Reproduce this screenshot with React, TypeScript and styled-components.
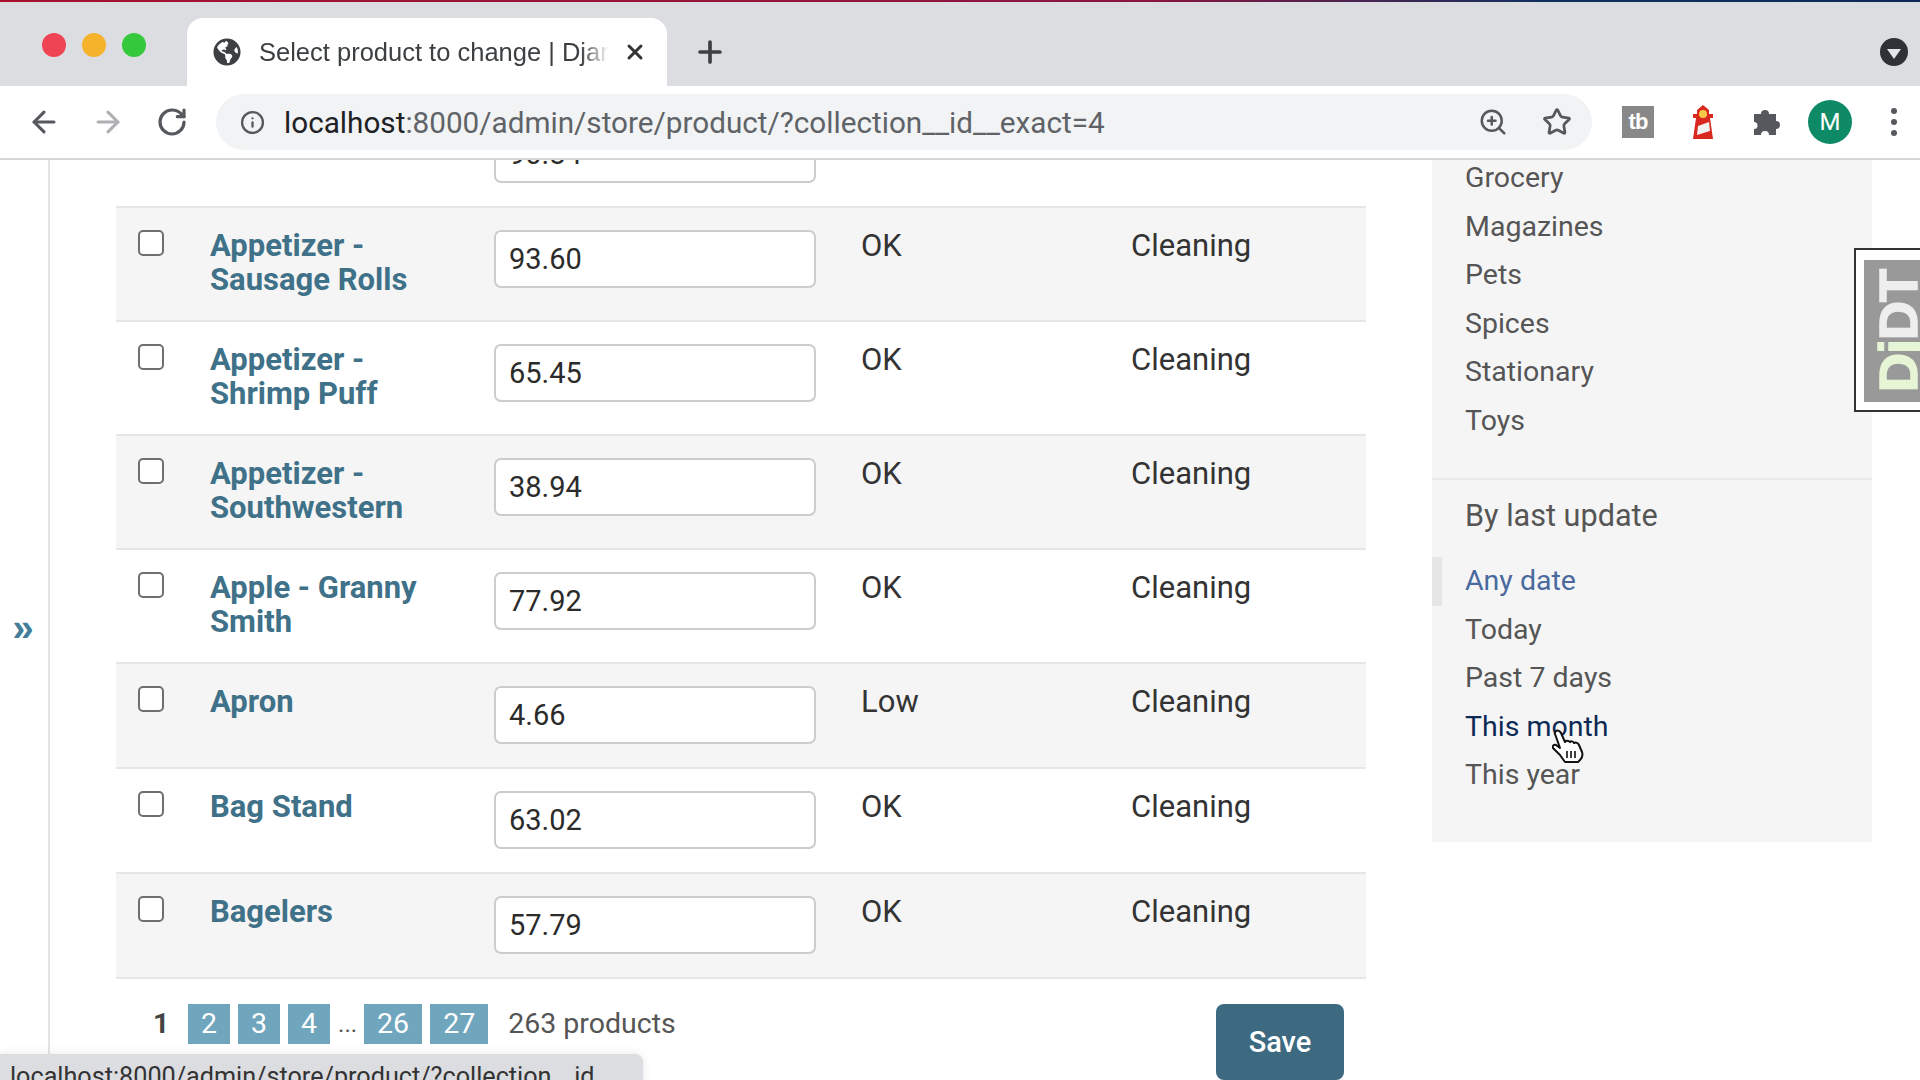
import React from 'react';
import styled, { createGlobalStyle } from 'styled-components';
import { ArrowLeft, ArrowRight, Info, Plus, RotateCw, Star, X, ZoomIn } from 'lucide-react';
import { FaGlobeAmericas } from 'react-icons/fa';

const GlobalStyle = createGlobalStyle`
  html, body {
    margin: 0;
    width: 1920px;
    height: 1080px;
    overflow: hidden;
    background: #fff;
    font-family: Roboto, "Liberation Sans", sans-serif;
  }
  * { box-sizing: border-box; }
`;

const Screen = styled.div`
  position: relative;
  width: 1920px;
  height: 1080px;
  overflow: hidden;
  display: flex;
  flex-direction: column;
`;

/* browser chrome */
const TabBar = styled.div`
  height: 86px;
  flex: none;
  display: flex;
  align-items: flex-end;
  padding: 2px 12px 0 36px;
  background: #dcdde1;
  border-top: 2px solid;
  border-image: linear-gradient(90deg, #a8122f 0%, #8a1540 60%, #12305e 80%, #0c2a55 100%) 1;
`;

const Lights = styled.div`
  display: flex;
  gap: 16px;
  align-self: center;
  margin: 0 0 0 6px;
`;

const Light = styled.span<{ $color: string }>`
  width: 24px;
  height: 24px;
  border-radius: 50%;
  background: ${p => p.$color};
`;

const Tab = styled.div`
  width: 480px;
  height: 68px;
  margin-left: 41px;
  padding: 0 20px 0 26px;
  display: flex;
  align-items: center;
  background: #fff;
  border-radius: 16px 16px 0 0;
  color: #3c4043;
`;

const TabTitle = styled.span`
  width: 350px;
  margin-left: 18px;
  overflow: hidden;
  white-space: nowrap;
  font: 25.5px "Liberation Sans", Arial, sans-serif;
  -webkit-mask-image: linear-gradient(90deg, #000 92%, transparent 100%);
  mask-image: linear-gradient(90deg, #000 92%, transparent 100%);
`;

const TabClose = styled.span`
  display: flex;
  margin-left: auto;
  color: #333;
`;

const NewTab = styled.span`
  display: flex;
  margin: 0 0 15px 26px;
  color: #3c4043;
  align-self: flex-end;
  padding-bottom: 2px;
`;

const TabMenu = styled.span`
  width: 28px;
  height: 28px;
  margin: 0 0 20px auto;
  display: flex;
  align-items: center;
  justify-content: center;
  border-radius: 50%;
  background: #2f3136;
  &::after {
    content: '';
    border-left: 7px solid transparent;
    border-right: 7px solid transparent;
    border-top: 10px solid #e4e5e8;
    margin-top: 3px;
  }
`;

const Toolbar = styled.div`
  height: 74px;
  flex: none;
  display: flex;
  align-items: center;
  padding: 0 0 0 27px;
  background: #fff;
  border-bottom: 2px solid #d6d6d8;
  color: #55585c;
`;

const NavIcon = styled.span<{ $muted?: boolean }>`
  display: flex;
  width: 34px;
  justify-content: center;
  margin-right: 30px;
  color: ${p => (p.$muted ? '#aeb0b3' : '#55585c')};
`;

const AddressBar = styled.div`
  width: 1376px;
  height: 56px;
  margin-left: -3px;
  padding: 0 20px 0 24px;
  display: flex;
  align-items: center;
  border-radius: 28px;
  background: #f1f3f4;
`;

const Url = styled.span`
  margin-left: 19px;
  font: 29.7px Roboto, sans-serif;
  color: #5f6368;
  white-space: nowrap;
`;

const UrlHost = styled.span`
  color: #202124;
`;

const AddressActions = styled.div`
  margin-left: auto;
  display: flex;
  align-items: center;
  gap: 34px;
  color: #55585c;
`;

const Extensions = styled.div`
  display: flex;
  align-items: center;
  margin-left: 30px;
`;

const TbLogo = styled.span`
  width: 32px;
  height: 32px;
  display: flex;
  align-items: center;
  justify-content: center;
  background: #888;
  color: #fff;
  font: bold 22px "Liberation Sans", sans-serif;
  letter-spacing: -1px;
`;

const ExtSlot = styled.span`
  display: flex;
  margin-left: 37px;
  color: #55585c;
`;

const Avatar = styled.span`
  width: 44px;
  height: 44px;
  margin-left: 26px;
  display: flex;
  align-items: center;
  justify-content: center;
  border-radius: 50%;
  background: #0f8a66;
  color: #fff;
  font: 24px Roboto, sans-serif;
`;

const Dots = styled.span`
  margin-left: 39px;
  display: flex;
  flex-direction: column;
  gap: 5px;
  i {
    width: 6px;
    height: 6px;
    border-radius: 50%;
    background: #55585c;
  }
`;

/* page */
const Page = styled.div`
  flex: 1;
  min-height: 0;
  display: flex;
`;

const NavToggle = styled.div`
  width: 50px;
  flex: none;
  padding: 450px 2px 0 0;
  text-align: center;
  border-right: 2px solid #e4e4e4;
  color: #447e9b;
  font: bold 38px/36px "Liberation Sans", sans-serif;
`;

const Main = styled.div`
  width: 1250px;
  flex: none;
  margin-left: 66px;
`;

const Row = styled.div<{ $shaded?: boolean; $clipped?: boolean }>`
  display: grid;
  grid-template-columns: 94px 284px 367px 270px 1fr;
  background: ${p => (p.$shaded ? '#f5f5f5' : '#fff')};
  ${p =>
    p.$clipped
      ? `
    height: 46px;
    overflow: hidden;
    align-content: end;
    padding-bottom: 23px;
  `
      : `
    border-top: 2px solid #e6e6e6;
    padding: 22px 0;
    min-height: 105px;
  `}
`;

const CheckCell = styled.div`
  padding-left: 22px;
`;

const Check = styled.span`
  display: block;
  width: 26px;
  height: 26px;
  border: 2px solid #6f6f6f;
  border-radius: 5px;
  background: #fff;
`;

const ProductName = styled.a`
  display: block;
  margin: -1px 0 1px;
  padding-right: 30px;
  font: bold 31px/34px Roboto, sans-serif;
  color: #3f7188;
`;

const Price = styled.input`
  display: block;
  width: 322px;
  height: 58px;
  padding: 0 0 0 13px;
  border: 2px solid #ccc;
  border-radius: 7px;
  background: #fff;
  outline: none;
  font: 29px Roboto, sans-serif;
  color: #2b2b2b;
`;

const Cell = styled.div`
  margin: -1px 0 1px;
  font: 31px/34px Roboto, sans-serif;
  color: #333;
`;

const Footer = styled.div`
  border-top: 2px solid #e6e6e6;
  padding: 25px 22px 0 37px;
  display: flex;
  justify-content: space-between;
  align-items: flex-start;
`;

const Paginator = styled.div`
  display: flex;
  align-items: center;
  height: 40px;
  font: 28.5px/40px Roboto, sans-serif;
  color: #555;
`;

const CurrentPage = styled.span`
  width: 35px;
  font-weight: bold;
  color: #444;
`;

const PageLink = styled.a`
  height: 40px;
  padding: 0 13px;
  min-width: 42px;
  margin-right: 8px;
  text-align: center;
  background: #6fa5bd;
  color: #fff;
`;

const Ellipsis = styled.span`
  width: 26px;
  color: #555;
  font-size: 24px;
`;

const Total = styled.span`
  margin-left: 12px;
`;

const SaveButton = styled.button`
  width: 128px;
  height: 76px;
  border: 0;
  border-radius: 8px;
  background: #3d6a80;
  color: #fff;
  font: 500 29px Roboto, sans-serif;
`;

const Sidebar = styled.aside`
  width: 440px;
  height: 682px;
  flex: none;
  margin-left: 66px;
  background: #f5f5f5;
  overflow: hidden;
`;

const FilterList = styled.ul<{ $first?: boolean }>`
  list-style: none;
  margin: ${p => (p.$first ? '-6px 0 0' : '0')};
  padding: 0;
`;

const FilterItem = styled.li<{ $selected?: boolean; $hover?: boolean }>`
  padding: 6px 0 6px ${p => (p.$selected ? '23px' : '33px')};
  font: 28.5px/36.5px Roboto, sans-serif;
  color: ${p => (p.$selected ? '#4a6a9f' : p.$hover ? '#0d2a55' : '#555')};
  border-left: ${p => (p.$selected ? '10px solid #e6e6e6' : '0')};
`;

const FilterDivider = styled.div`
  height: 2px;
  margin-top: 33px;
  background: #e8e8e8;
`;

const FilterTitle = styled.h3`
  margin: 18px 0 23px;
  padding-left: 33px;
  font: 400 30.6px/36px Roboto, sans-serif;
  color: #555;
`;

/* overlays */
const DebugHandle = styled.div`
  position: absolute;
  top: 248px;
  left: 1854px;
  width: 80px;
  height: 164px;
  padding: 10px 0 8px 8px;
  background: #fff;
  border: 2px solid #333;
`;

const DebugInner = styled.div`
  height: 100%;
  display: flex;
  align-items: center;
  justify-content: center;
  background: #999;
  overflow: hidden;
`;

const DebugLabel = styled.span`
  writing-mode: vertical-rl;
  transform: rotate(180deg);
  font: bold 54px/60px "Liberation Sans", sans-serif;
  letter-spacing: -1px;
  -webkit-text-stroke: 1.5px currentColor;
  color: #eee;
  b { color: #e5f5d5; }
`;

const StatusBubble = styled.div`
  position: absolute;
  left: 0;
  top: 1054px;
  width: 643px;
  height: 40px;
  padding: 6px 0 0 10px;
  background: #dcdde1;
  border-radius: 0 8px 0 0;
  box-shadow: 0 0 10px rgba(0, 0, 0, 0.1);
  font: 25.2px/34px Roboto, sans-serif;
  color: #333;
  white-space: nowrap;
`;

const HandCursor = styled.svg`
  position: absolute;
  left: 1552px;
  top: 729px;
`;

type Product = { name: string; price: string; status: string };

const PRODUCTS: Product[] = [
  { name: 'Appetizer - Sausage Rolls', price: '93.60', status: 'OK' },
  { name: 'Appetizer - Shrimp Puff', price: '65.45', status: 'OK' },
  { name: 'Appetizer - Southwestern', price: '38.94', status: 'OK' },
  { name: 'Apple - Granny Smith', price: '77.92', status: 'OK' },
  { name: 'Apron', price: '4.66', status: 'Low' },
  { name: 'Bag Stand', price: '63.02', status: 'OK' },
  { name: 'Bagelers', price: '57.79', status: 'OK' },
];

const COLLECTIONS = ['Grocery', 'Magazines', 'Pets', 'Spices', 'Stationary', 'Toys'];

function Lighthouse() {
  return (
    <svg width="24" height="34" viewBox="0 0 24 34">
      <path d="M12 0l6 5v4h4v4h-3l3 21H2L5 13H2V9h4V5z" fill="#d9281f" />
      <circle cx="12" cy="9" r="4" fill="#f7c948" />
      <path d="M7 21l11-4 1 9-13 4z" fill="#f2f2f2" />
    </svg>
  );
}

function Puzzle() {
  return (
    <svg width="30" height="30" viewBox="0 0 30 30" fill="#55585c">
      <path d="M2 7h7a4 4 0 0 1 8 0h7v7a4 4 0 0 1 0 8v6h-7a3.5 3.5 0 0 0-8 0H2v-6a3.5 3.5 0 0 0 0-7z" />
    </svg>
  );
}

function App(): JSX.Element {
  return (
    <Screen>
      <GlobalStyle />
      <TabBar>
        <Lights>
          <Light $color="#ef4453" />
          <Light $color="#f5b32b" />
          <Light $color="#34c83d" />
        </Lights>
        <Tab>
          <FaGlobeAmericas size={28} />
          <TabTitle>Select product to change | Django site admin</TabTitle>
          <TabClose>
            <X size={24} strokeWidth={3} />
          </TabClose>
        </Tab>
        <NewTab>
          <Plus size={34} strokeWidth={2.6} />
        </NewTab>
        <TabMenu />
      </TabBar>
      <Toolbar>
        <NavIcon>
          <ArrowLeft size={34} strokeWidth={2.2} />
        </NavIcon>
        <NavIcon $muted>
          <ArrowRight size={34} strokeWidth={2.2} />
        </NavIcon>
        <NavIcon>
          <RotateCw size={32} strokeWidth={2.4} />
        </NavIcon>
        <AddressBar>
          <Info size={25} strokeWidth={2.2} />
          <Url>
            <UrlHost>localhost</UrlHost>:8000/admin/store/product/?collection__id__exact=4
          </Url>
          <AddressActions>
            <ZoomIn size={30} strokeWidth={2} />
            <Star size={30} strokeWidth={2.2} />
          </AddressActions>
        </AddressBar>
        <Extensions>
          <TbLogo>tb</TbLogo>
          <ExtSlot>
            <Lighthouse />
          </ExtSlot>
          <ExtSlot>
            <Puzzle />
          </ExtSlot>
          <Avatar>M</Avatar>
          <Dots>
            <i />
            <i />
            <i />
          </Dots>
        </Extensions>
      </Toolbar>
      <Page>
        <NavToggle>»</NavToggle>
        <Main>
          <Row $clipped>
            <span />
            <span />
            <Price readOnly value="90.84" />
          </Row>
          {PRODUCTS.map((product, i) => (
            <Row key={product.name} $shaded={i % 2 === 0}>
              <CheckCell>
                <Check />
              </CheckCell>
              <ProductName>{product.name}</ProductName>
              <Price readOnly value={product.price} />
              <Cell>{product.status}</Cell>
              <Cell>Cleaning</Cell>
            </Row>
          ))}
          <Footer>
            <Paginator>
              <CurrentPage>1</CurrentPage>
              <PageLink>2</PageLink>
              <PageLink>3</PageLink>
              <PageLink>4</PageLink>
              <Ellipsis>...</Ellipsis>
              <PageLink>26</PageLink>
              <PageLink>27</PageLink>
              <Total>263 products</Total>
            </Paginator>
            <SaveButton>Save</SaveButton>
          </Footer>
        </Main>
        <Sidebar>
          <FilterList $first>
            {COLLECTIONS.map(name => (
              <FilterItem key={name}>{name}</FilterItem>
            ))}
          </FilterList>
          <FilterDivider />
          <FilterTitle>By last update</FilterTitle>
          <FilterList>
            <FilterItem $selected>Any date</FilterItem>
            <FilterItem>Today</FilterItem>
            <FilterItem>Past 7 days</FilterItem>
            <FilterItem $hover>This month</FilterItem>
            <FilterItem>This year</FilterItem>
          </FilterList>
        </Sidebar>
      </Page>
      <DebugHandle>
        <DebugInner>
          <DebugLabel>
            <b>Dj</b>DT
          </DebugLabel>
        </DebugInner>
      </DebugHandle>
      <StatusBubble>localhost:8000/admin/store/product/?collection__id</StatusBubble>
      <HandCursor width="32" height="34" viewBox="0 0 32 34">
        <path
          d="M4 2c2-1 4 0 5 2l4 9 1-1c2-1 3 0 4 1 1-1 3-1 4 1 2-1 4 0 5 2l3 7c1 3 0 6-2 8l-2 2H13l-5-7-7-7c-1-2 1-4 3-3l4 3L3 5c-.5-1 0-2 1-3z"
          fill="#fff"
          stroke="#111"
          strokeWidth="2"
          strokeLinejoin="round"
        />
        <path d="M15 22v7M19 22v7M23 22v7" stroke="#111" strokeWidth="1.6" />
      </HandCursor>
    </Screen>
  );
}

export default App;
